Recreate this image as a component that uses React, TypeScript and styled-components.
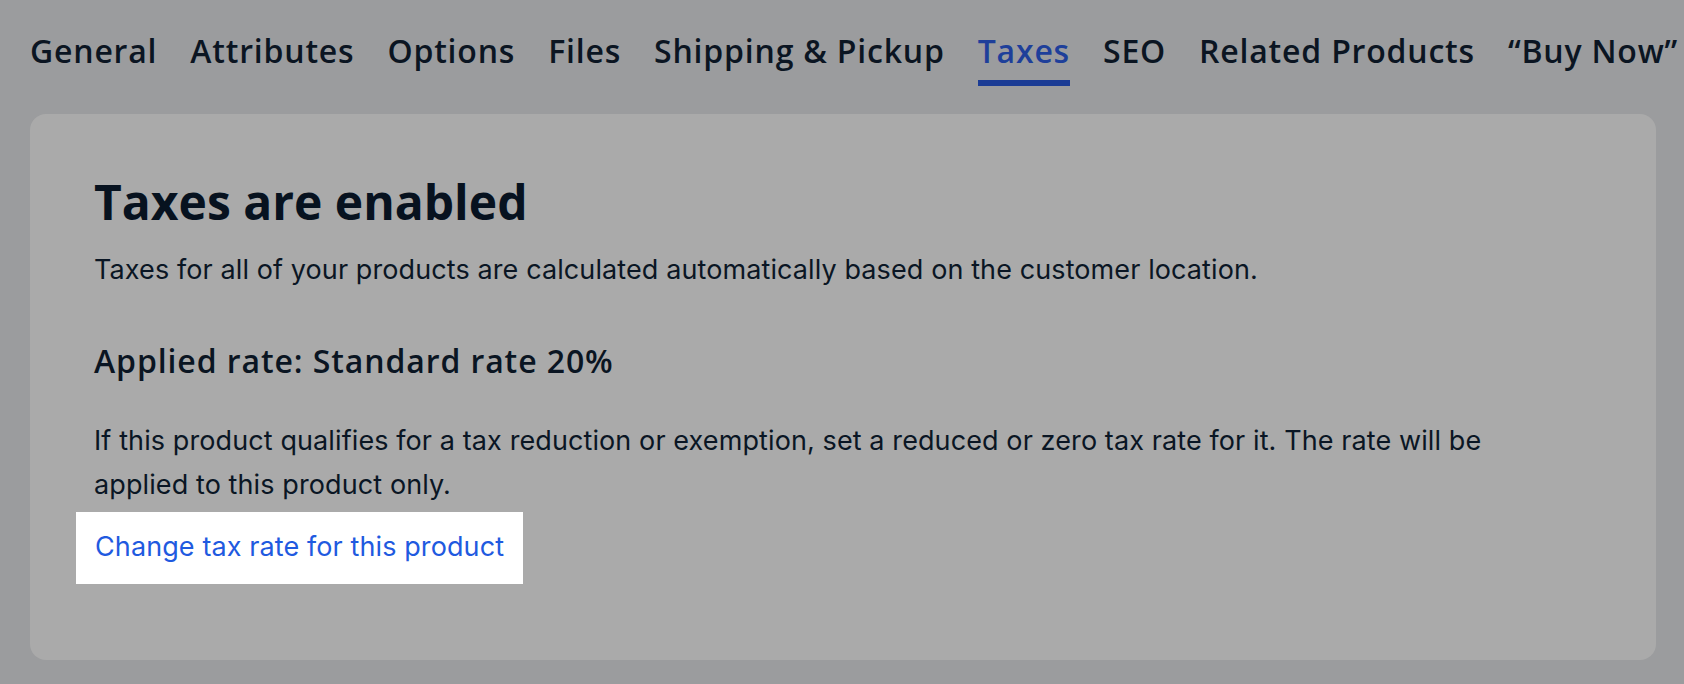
import React from "react";
import styled, { createGlobalStyle } from "styled-components";

const GlobalStyle = createGlobalStyle`
  html, body {
    margin: 0;
    padding: 0;
    background: #9b9c9e;
  }
  * {
    box-sizing: border-box;
  }
`;

const Page = styled.div`
  width: 1684px;
  height: 684px;
  overflow: hidden;
  padding: 0 28px 0 30px;
  background: #9b9c9e;
`;

const TabBar = styled.nav`
  display: flex;
  gap: 33px;
  height: 86px;
  white-space: nowrap;
`;

interface TabProps {
  active?: boolean;
}

const Tab = styled.a<TabProps>`
  display: flex;
  align-items: flex-end;
  padding-bottom: 11px;
  border-bottom: 6px solid ${({ active }) => (active ? "#1b3c95" : "transparent")};
  font-family: "Open Sans", "Noto Sans", sans-serif;
  font-weight: 600;
  font-size: 32px;
  letter-spacing: 0.8px;
  line-height: 36px;
  color: ${({ active }) => (active ? "#1e3f9a" : "#0b1522")};
  text-decoration: none;
  cursor: pointer;
`;

const Card = styled.section`
  margin-top: 28px;
  height: 546px;
  background: #aaaaaa;
  border-radius: 16px;
  padding: 58px 64px 0;
`;

const Heading = styled.h1`
  margin: 0;
  font-family: "Open Sans", "Noto Sans", sans-serif;
  font-weight: 700;
  font-size: 48px;
  line-height: 60px;
  color: #07121f;
`;

const Text = styled.p`
  margin: 0;
  font-family: "Inter", "Noto Sans", sans-serif;
  font-size: 27px;
  letter-spacing: 0.1px;
  line-height: 44px;
  color: #0a1624;
  max-width: 1450px;
`;

const Description = styled(Text)`
  margin-top: 16px;
`;

const SubHeading = styled.h2`
  margin: 49px 0 0;
  font-family: "Open Sans", "Noto Sans", sans-serif;
  font-weight: 600;
  font-size: 32px;
  letter-spacing: 0.9px;
  line-height: 40px;
  color: #0a1522;
`;

const Paragraph = styled(Text)`
  margin-top: 38px;
`;

const Spotlight = styled.div`
  display: inline-block;
  margin: 5px 0 0 -18px;
  padding: 13px 19px 15px;
  background: #ffffff;
`;

const Link = styled.a`
  font-family: "Inter", "Noto Sans", sans-serif;
  font-size: 27px;
  letter-spacing: 0.1px;
  line-height: 44px;
  color: #1f5ae0;
  text-decoration: none;
  cursor: pointer;
`;

const tabs = [
  "General",
  "Attributes",
  "Options",
  "Files",
  "Shipping & Pickup",
  "Taxes",
  "SEO",
  "Related Products",
  "\u201cBuy Now\u201d",
];

export default function App() {
  return (
    <>
      <GlobalStyle />
      <Page>
        <TabBar>
          {tabs.map((t) => (
            <Tab key={t} active={t === "Taxes"}>
              {t}
            </Tab>
          ))}
        </TabBar>
        <Card>
          <Heading>Taxes are enabled</Heading>
          <Description>
            Taxes for all of your products are calculated automatically based on the customer location.
          </Description>
          <SubHeading>Applied rate: Standard rate 20%</SubHeading>
          <Paragraph>
            If this product qualifies for a tax reduction or exemption, set a reduced or zero tax rate for it. The rate
            will be applied to this product only.
          </Paragraph>
          <Spotlight>
            <Link>Change tax rate for this product</Link>
          </Spotlight>
        </Card>
      </Page>
    </>
  );
}
